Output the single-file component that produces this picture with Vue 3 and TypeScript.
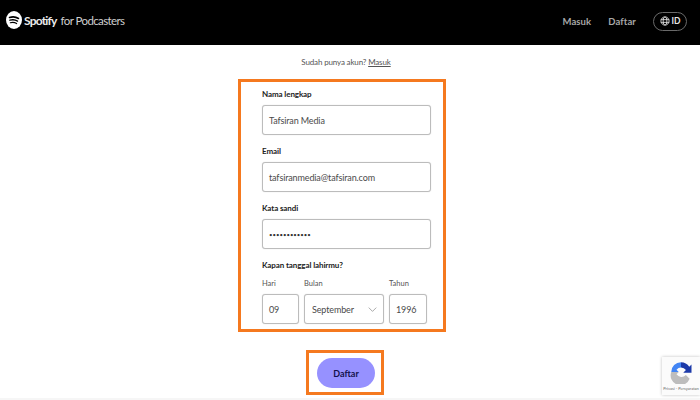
<template>
  <div class="page">
    <header class="topbar">
      <div class="brand">
        <svg class="brand-icon" viewBox="0 0 24 24" preserveAspectRatio="none" aria-hidden="true">
          <circle cx="12" cy="12" r="12" fill="#fff" />
          <path d="M5.2 8.6c4.4-1.3 9.6-1 13.6 1.3" class="wave" stroke-width="2.2" />
          <path d="M5.8 12.3c3.8-1.1 8.3-.7 11.6 1.2" class="wave" stroke-width="1.8" />
          <path d="M6.4 15.7c3.2-.8 6.8-.5 9.6 1.1" class="wave" stroke-width="1.5" />
        </svg>
        <span class="brand-name">Spotify</span>
        <span class="brand-sub">for Podcasters</span>
      </div>
      <nav class="nav">
        <a class="nav-link">Masuk</a>
        <a class="nav-link">Daftar</a>
        <button class="lang" type="button">
          <svg viewBox="0 0 16 16" class="globe" aria-hidden="true">
            <circle cx="8" cy="8" r="6.6" />
            <ellipse cx="8" cy="8" rx="3" ry="6.6" />
            <path d="M1.4 5.8h13.2M1.4 10.2h13.2" />
          </svg>
          <span>ID</span>
        </button>
      </nav>
    </header>

    <main class="content">
      <p class="signin">Sudah punya akun? <a>Masuk</a></p>

      <form class="form-box" @submit.prevent>
        <div v-for="field in fields" :key="field.label" class="field">
          <label class="label">{{ field.label }}</label>
          <div class="input" :class="{ dots: field.secret }">{{ field.value }}</div>
        </div>

        <div class="birth">
          <div class="label">Kapan tanggal lahirmu?</div>
          <div class="birth-row">
            <div class="part">
              <span class="small">Hari</span>
              <div class="input">09</div>
            </div>
            <div class="part">
              <span class="small">Bulan</span>
              <div class="input select">
                September
                <svg viewBox="0 0 14 8" class="chev" aria-hidden="true"><path d="M1 1l6 6 6-6" /></svg>
              </div>
            </div>
            <div class="part">
              <span class="small">Tahun</span>
              <div class="input">1996</div>
            </div>
          </div>
        </div>
      </form>

      <div class="submit-box">
        <button class="submit" type="button">Daftar</button>
      </div>
    </main>

    <div class="recaptcha">
      <svg viewBox="0 0 32 32" class="rc-icon" aria-hidden="true">
        <path d="M16 3a13 13 0 0 1 11 6l3-3v11H19l3.6-3.6A8 8 0 0 0 16 10z" fill="#1c3aa9" />
        <path d="M3 16A13 13 0 0 1 16 3v7a8 8 0 0 0-6 3l3 3H3z" fill="#4285f4" />
        <path d="M3 16h10l-3 3a8 8 0 0 0 12.500 1l5 5A13 13 0 0 1 3 16z" fill="#bdbdbd" />
      </svg>
      <span class="rc-text">Privasi - Persyaratan</span>
    </div>
  </div>
</template>

<script setup lang="ts">
interface Field {
  label: string
  value: string
  secret?: boolean
}

const fields: Field[] = [
  { label: 'Nama lengkap', value: 'Tafsiran Media' },
  { label: 'Email', value: 'tafsiranmedia@tafsiran.com' },
  { label: 'Kata sandi', value: '••••••••••••', secret: true }
]
</script>

<style>
html,
body {
  margin: 0;
  background: #fff;
}
</style>

<style scoped>
.page {
  position: relative;
  width: 700px;
  height: 400px;
  box-sizing: border-box;
  overflow: hidden;
  font-family: Lato, "Liberation Sans", sans-serif;
  color: #3f3f3f;
  background: #fff;
  box-shadow: inset 0 -2px 0 #f6f6f6;
}

.topbar {
  height: 45px;
  box-sizing: border-box;
  padding: 0 13px 0 6px;
  display: flex;
  align-items: center;
  justify-content: space-between;
  background: #000;
}

.brand {
  display: flex;
  align-items: center;
  color: #ececec;
  margin-top: -5px;
}

.brand-icon {
  width: 16px;
  height: 18px;
  margin-right: 2px;
}

.wave {
  fill: none;
  stroke: #000;
  stroke-linecap: round;
}

.brand-name {
  font-size: 12px;
  font-weight: 700;
  letter-spacing: -0.8px;
}

.brand-sub {
  margin-left: 4px;
  font-size: 11.500px;
  font-weight: 400;
  letter-spacing: -0.6px;
  color: #cfcfcf;
}

.nav {
  display: flex;
  align-items: center;
  margin-top: -3px;
}

.nav-link {
  margin-right: 17px;
  font-size: 9.500px;
  font-weight: 700;
  letter-spacing: 0.1px;
  color: #a8a8a8;
}

.lang {
  width: 34px;
  height: 19px;
  padding: 0;
  display: flex;
  align-items: center;
  justify-content: center;
  gap: 2px;
  border: 1px solid #6a6a6a;
  border-radius: 10px;
  background: transparent;
  color: #e6e6e6;
  font: 700 8.500px Lato, sans-serif;
}

.globe {
  width: 10px;
  height: 10px;
  fill: none;
  stroke: #e6e6e6;
  stroke-width: 1.3;
}

.content {
  display: flex;
  flex-direction: column;
  align-items: center;
}

.signin {
  margin: 11px 0 11px -8px;
  height: 12px;
  font-size: 8px;
  line-height: 12px;
  letter-spacing: -0.15px;
  color: #555;
}

.signin a {
  text-decoration: underline;
}

.form-box {
  width: 208px;
  height: 253px;
  box-sizing: border-box;
  margin-left: -16px;
  padding: 6px 12px 0 21px;
  border: 3px solid #f5791f;
  display: flex;
  flex-direction: column;
  gap: 10px;
}

.field {
  display: flex;
  flex-direction: column;
  gap: 4px;
}

.label {
  height: 13px;
  font-size: 8px;
  line-height: 13px;
  font-weight: 700;
  letter-spacing: -0.1px;
  color: #222;
}

.input {
  height: 30px;
  box-sizing: border-box;
  padding: 0 6px;
  display: flex;
  align-items: center;
  font-size: 9px;
  letter-spacing: -0.13px;
  color: #4a4a4a;
  background: #fff;
  border: 1px solid #bcbcbc;
  border-radius: 3px;
  box-shadow: 0 0 1px #c8c8c8;
}

.dots {
  font-size: 6px;
  letter-spacing: 0;
  color: #333;
}

.birth-row {
  margin-top: 5px;
  display: grid;
  grid-template-columns: 37px 80px 38px;
  gap: 5px;
}

.part {
  display: flex;
  flex-direction: column;
  gap: 4px;
}

.small {
  height: 13px;
  font-size: 7.500px;
  line-height: 13px;
  color: #555;
}

.select {
  justify-content: space-between;
  padding-left: 7px;
}

.chev {
  width: 9px;
  height: 5px;
  fill: none;
  stroke: #777;
  stroke-width: 1;
}

.submit-box {
  width: 78px;
  height: 45px;
  box-sizing: border-box;
  margin: 18px 0 0 -10px;
  display: flex;
  align-items: flex-start;
  justify-content: center;
  padding: 5px 0 0 2px;
  border: 3px solid #f5791f;
}

.submit {
  width: 58px;
  height: 30px;
  padding: 0;
  border: 0;
  border-radius: 15px;
  background: #9691ff;
  color: #14114d;
  font: 700 9px Lato, sans-serif;
}

.recaptcha {
  position: absolute;
  right: 0;
  bottom: 5px;
  width: 38px;
  height: 38px;
  display: flex;
  flex-direction: column;
  align-items: center;
  padding-top: 3px;
  box-sizing: border-box;
  background: #fbfbfb;
  box-shadow: 0 0 3px rgba(0, 0, 0, 0.25);
}

.rc-icon {
  width: 24px;
  height: 24px;
}

.rc-text {
  margin-top: 2px;
  font-size: 4px;
  white-space: nowrap;
  color: #666;
}
</style>
